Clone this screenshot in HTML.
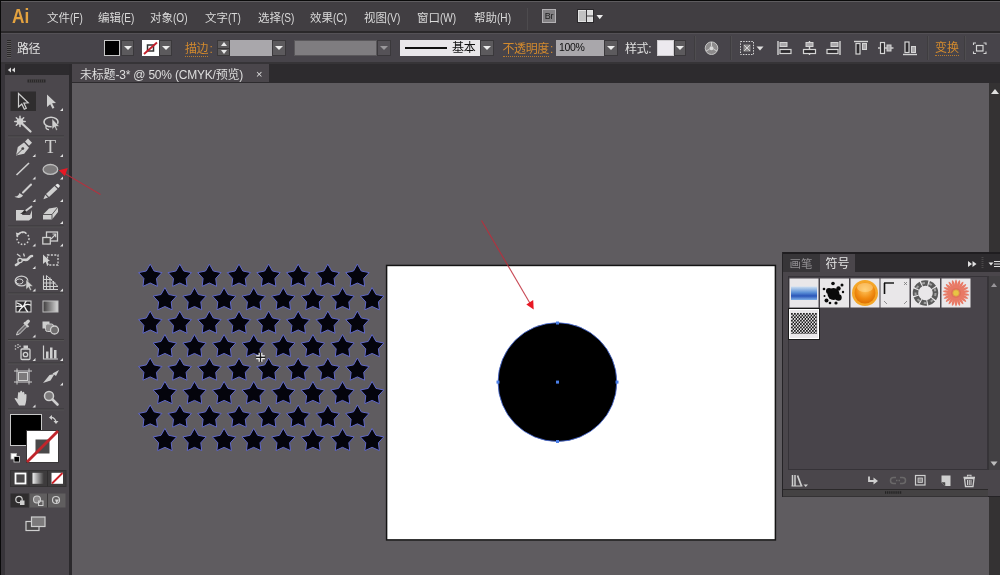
<!DOCTYPE html>
<html lang="zh"><head><meta charset="utf-8"><title>Ai</title>
<style>
*{margin:0;padding:0;box-sizing:border-box}
html,body{width:1000px;height:575px;overflow:hidden;background:#5f5c60;font-family:"Liberation Sans","Noto Sans CJK SC",sans-serif;font-size:12px;color:#dcdcdc}
.abs{position:absolute}
#menubar,#ctrl,#tab,.gs{will-change:transform}
#menubar{left:0;top:0;width:1000px;height:32px;background:#413e42;border-top:1px solid #0a0a0a;box-shadow:inset 0 1px 0 #5e5c5f}
#menubar span{position:absolute;top:9.5px;line-height:14px;font-size:11.5px;color:#dadada;white-space:nowrap;letter-spacing:-.1px}
#menubar span small{font-size:12px;letter-spacing:0;display:inline-block;transform:scaleX(.84);transform-origin:0 50%}
#mline{left:0;top:31px;width:1000px;height:2px;background:#2a282a}
#ctrl{left:0;top:33px;width:1000px;height:29px;background:#47444a;border-top:1px solid #545156}
#ctrl .t{position:absolute;top:8px;line-height:14px;font-size:12px;white-space:nowrap;letter-spacing:-.4px}
.or{color:#d28a2e;border-bottom:1px dotted #b87a2c}
.dd{position:absolute;top:6px;height:16px;background:#5c5a5d;border:1px solid #3a383b}
.dd:after{content:"";position:absolute;left:50%;top:5px;margin-left:-4px;border-left:4px solid transparent;border-right:4px solid transparent;border-top:4.5px solid #ececec}
.box{position:absolute;top:6px;height:16px}
.dis:after{border-top-color:#9a989b}
#strip{left:0;top:62px;width:1000px;height:3px;background:#363437}
#tabbar{left:72px;top:64px;width:928px;height:19px;background:#2d2b2e}
#tab{left:72px;top:64px;width:197px;height:18px;overflow:hidden;background:#4a464b;font-size:12px;line-height:23px;color:#dedede;padding-left:8px;white-space:nowrap;letter-spacing:-.2px}
#tools{left:0;top:64px;width:72px;height:511px;background:#4b474c;border-left:5px solid #38353a;border-right:3px solid #2b292c}
#toolhead{left:5px;top:64px;width:64px;height:11px;background:#2d2b2e}
#lb{left:0;top:0;width:1px;height:575px;background:#0a0a0a}
</style></head><body>

<div id="menubar" class="abs">
<span style="left:11.500px;top:3px;font-size:20.5px;line-height:24px;font-weight:bold;color:#e3a23f;letter-spacing:0;transform:scaleX(.84);transform-origin:0 0">Ai</span>
<span style="left:47px">文件<small>(F)</small></span>
<span style="left:98px">编辑<small>(E)</small></span>
<span style="left:150px">对象<small>(O)</small></span>
<span style="left:205px">文字<small>(T)</small></span>
<span style="left:258px">选择<small>(S)</small></span>
<span style="left:310px">效果<small>(C)</small></span>
<span style="left:364px">视图<small>(V)</small></span>
<span style="left:417px">窗口<small>(W)</small></span>
<span style="left:474px">帮助<small>(H)</small></span>
<div class="abs" style="left:527px;top:7px;width:1px;height:22px;background:#4d4b4e"></div>
<div class="abs" style="left:542px;top:8px;width:14px;height:14px;background:#838184;border:1px solid #b4b2b5;font-size:9px;line-height:12px;text-align:center;color:#1c1c1c;letter-spacing:-.3px">Br</div>
<svg class="abs" style="left:577px;top:8px" width="30" height="15" viewBox="0 0 30 15"><rect x="0.5" y="0.5" width="16" height="13" fill="#e4e4e4" stroke="#2a282b"/><rect x="2" y="2" width="7" height="10" fill="#c2c2c2"/><rect x="10" y="2" width="5" height="4.500" fill="#dcdcdc"/><rect x="10" y="7.500" width="5" height="4.500" fill="#dcdcdc"/><path d="M9.500 1v12M9.500 7h6.500" stroke="#3a383b" stroke-width="1"/><path d="M19.500 6h6.500l-3.250 4.200z" fill="#ececec"/></svg>
</div><div id="mline" class="abs"></div>
<div id="ctrl" class="abs">
<div class="abs" style="left:7px;top:6px;width:4px;height:18px;background:repeating-linear-gradient(#2a2829 0 1px,#5a5859 1px 2px)"></div>
<span class="t" style="left:17px;color:#e0e0e0">路径</span>
<div class="box" style="left:104px;width:16px;background:#000;border:1px solid #c8c8c8"></div>
<div class="dd" style="left:121px;width:13px"></div>
<svg class="abs" style="left:141.500px;top:6px" width="17" height="16" viewBox="0.500 0 17 16"><rect width="18" height="16" fill="#fff"/><rect x="6" y="5" width="6" height="6" fill="none" stroke="#333" stroke-width="1.500"/><path d="M2.500 14L15.500 2.500" stroke="#c4202c" stroke-width="1.900"/></svg>
<div class="dd" style="left:159px;width:13px"></div>
<span class="t or" style="left:185px">描边</span><span class="t" style="left:209.500px;color:#d28a2e">:</span>
<div class="box" style="left:217px;width:13px;background:#5c5a5b;border:1px solid #3a3839"><i style="position:absolute;left:2.500px;top:1px;border-left:3px solid transparent;border-right:3px solid transparent;border-bottom:4px solid #e8e8e8"></i><i style="position:absolute;left:2.500px;top:9px;border-left:3px solid transparent;border-right:3px solid transparent;border-top:4px solid #e8e8e8"></i><i style="position:absolute;left:0;top:6.500px;width:11px;height:1px;background:#3a3839"></i></div>
<div class="box" style="left:230px;width:42px;background:#a9a7ab"></div>
<div class="dd" style="left:272px;width:14px"></div>
<div class="box" style="left:294px;width:83px;background:#7f7d80;border:1px solid #5a585b"></div>
<div class="dd dis" style="left:377px;width:14px;background:#555257"></div>
<div class="box" style="left:400px;width:80px;background:#e9e7ea"><i style="position:absolute;left:5px;top:7px;width:42px;height:2px;background:#111"></i><span style="position:absolute;left:52px;top:1px;font-size:12px;line-height:14px;color:#111;letter-spacing:-.3px">基本</span></div>
<div class="dd" style="left:480px;width:14px"></div>
<span class="t or" style="left:502.500px">不透明度</span><span class="t" style="left:550px;color:#d28a2e">:</span>
<div class="box" style="left:556px;width:48px;background:#a9a7ab;color:#111;font-size:10.5px;line-height:15px;padding-left:3px;letter-spacing:-.3px">100%</div>
<div class="dd" style="left:604px;width:14px"></div>
<span class="t" style="left:625px;color:#e0e0e0">样式:</span>
<div class="box" style="left:657px;width:17px;background:#ece9ee;border:1px solid #cfcdd0"></div>
<div class="dd" style="left:674px;width:12px"></div>
</div>
<div id="strip" class="abs"></div><div id="tabbar" class="abs"></div>
<div id="tab" class="abs">未标题-3* @ 50% (CMYK/预览)<span style="position:absolute;left:184px;top:-1px;font-size:11px">×</span></div>
<div id="tools" class="abs"></div><div id="toolhead" class="abs"></div><div id="lb" class="abs"></div>
<svg class="abs gs" style="left:0;top:0" width="80" height="575" viewBox="0 0 80 575"><path d="M11 67.500v5l-3.200-2.500zM15 67.500v5l-3.200-2.500z" fill="#d8d8d8"/><rect x="27.500" y="79.500" width="18" height="3" fill="#2b292a"/><g stroke="#4a4849" stroke-width="0.700"><path d="M29.5 79.500v3"/><path d="M31.5 79.500v3"/><path d="M33.5 79.500v3"/><path d="M35.5 79.500v3"/><path d="M37.5 79.500v3"/><path d="M39.5 79.500v3"/><path d="M41.5 79.500v3"/><path d="M43.5 79.500v3"/></g><path d="M8 136.0H64" stroke="#3b393a" stroke-width="1"/><path d="M8 137.0H64" stroke="#535152" stroke-width="1"/><path d="M8 226.0H64" stroke="#3b393a" stroke-width="1"/><path d="M8 227.0H64" stroke="#535152" stroke-width="1"/><path d="M8 293.0H64" stroke="#3b393a" stroke-width="1"/><path d="M8 294.0H64" stroke="#535152" stroke-width="1"/><path d="M8 339.5H64" stroke="#3b393a" stroke-width="1"/><path d="M8 340.5H64" stroke="#535152" stroke-width="1"/><path d="M8 363.0H64" stroke="#3b393a" stroke-width="1"/><path d="M8 364.0H64" stroke="#535152" stroke-width="1"/><path d="M8 409.0H64" stroke="#3b393a" stroke-width="1"/><path d="M8 410.0H64" stroke="#535152" stroke-width="1"/><path d="M63.0 111.0v-3l-3 3z" fill="#e0e0e0"/><path d="M35.5 157.0v-3l-3 3z" fill="#e0e0e0"/><path d="M63.0 157.0v-3l-3 3z" fill="#e0e0e0"/><path d="M35.5 179.5v-3l-3 3z" fill="#e0e0e0"/><path d="M63.0 179.5v-3l-3 3z" fill="#e0e0e0"/><path d="M35.5 202.0v-3l-3 3z" fill="#e0e0e0"/><path d="M63.0 202.0v-3l-3 3z" fill="#e0e0e0"/><path d="M63.0 224.0v-3l-3 3z" fill="#e0e0e0"/><path d="M35.5 246.5v-3l-3 3z" fill="#e0e0e0"/><path d="M63.0 246.5v-3l-3 3z" fill="#e0e0e0"/><path d="M35.5 269.0v-3l-3 3z" fill="#e0e0e0"/><path d="M35.5 291.5v-3l-3 3z" fill="#e0e0e0"/><path d="M63.0 291.5v-3l-3 3z" fill="#e0e0e0"/><path d="M35.5 337.5v-3l-3 3z" fill="#e0e0e0"/><path d="M35.5 361.0v-3l-3 3z" fill="#e0e0e0"/><path d="M63.0 361.0v-3l-3 3z" fill="#e0e0e0"/><path d="M63.0 385.5v-3l-3 3z" fill="#e0e0e0"/><path d="M35.5 407.5v-3l-3 3z" fill="#e0e0e0"/><rect x="10.500" y="91.500" width="25.500" height="19.500" fill="#2f2d2e"/><path d="M18.500 93.500V107l3.300-3 2.500 5.300 2-1-2.500-5.200 4.400-.3z" fill="#2f2d2e" stroke="#cfcfcf" stroke-width="1.200" stroke-linejoin="miter"/><path d="M47 94.500V107l3.200-2.800 2.300 4.600 1.900-1-2.300-4.500 3.900-.3z" fill="#cfcfcf"/><g stroke="#cfcfcf" stroke-linecap="round"><path d="M22.500 124L30.500 131.500" stroke-width="2.300"/><path d="M20 116.300V126.500M14.800 121.500H25.200M16.300 117.800L23.700 125.200M23.700 117.800L16.300 125.200" stroke-width="1.500"/></g><circle cx="20" cy="121.500" r="3.300" fill="#cfcfcf"/><ellipse cx="51" cy="122" rx="7" ry="4.800" fill="none" stroke="#cfcfcf" stroke-width="1.600"/><path d="M46.500 125.500c-1.500 2 0 4.500 2.500 4" fill="none" stroke="#cfcfcf" stroke-width="1.300"/><path d="M52 118.500v11l2.600-2.400 1.500 3.400 1.500-.7-1.500-3.300 3.300-.2z" fill="#cfcfcf" stroke="#4a4849" stroke-width="0.600"/><path d="M16 155.500l1.800-8.500 6.200-4.500 5 5.200-4.800 6z" fill="#cfcfcf"/><path d="M25 141.500l3-3 4 4.200-3 3z" fill="#cfcfcf"/><path d="M16.500 155l6-6" stroke="#4a4849" stroke-width="1"/><circle cx="22.800" cy="148.600" r="1.400" fill="#4a4849"/><text x="50.300" y="153.300" font-family="Liberation Serif,serif" font-size="18.500" text-anchor="middle" fill="#cfcfcf">T</text><path d="M16.500 175L29 163" stroke="#cfcfcf" stroke-width="1.600"/><ellipse cx="50.400" cy="169.400" rx="7.300" ry="4.900" fill="#7c7a7b" stroke="#bdbdbd" stroke-width="1.300"/><path d="M31 184.500L23 192.500" stroke="#cfcfcf" stroke-width="2" stroke-linecap="round"/><path d="M14.500 196.500c3 .3 4-1 5-3.500l3.500 2.500c-1.500 2.500-5 3.500-8.500 1z" fill="#cfcfcf"/><path d="M54.500 186l3 3-8.500 8-3-3z" fill="#cfcfcf"/><path d="M45.200 194.800l2.800 2.800-4.600 1.600z" fill="#cfcfcf"/><path d="M55.300 185.300l1.200-1a1.300 1.300 0 0 1 2 0l.8.800a1.300 1.300 0 0 1 0 2l-1 1z" fill="#e6e6e6"/><path d="M16 210h8l-2 5h8l2-5v8l-3 2.500H16z" fill="#cfcfcf"/><path d="M31.500 206.500l-6 4.500" stroke="#cfcfcf" stroke-width="1.800" stroke-linecap="round"/><path d="M20 213.500c2-.5 3.500-2.500 5-3.500l1.500 2c-1.500 1.500-4 2.500-6.500 1.500z" fill="#2f2d2e"/><path d="M49 208.500l9-1.500v5l-6 7.500h-9v-5z" fill="#cfcfcf"/><path d="M43 214.500h9l6-7.500M52 214.500v5" fill="none" stroke="#4a4849" stroke-width="0.900"/><circle cx="23" cy="238.500" r="6" fill="none" stroke="#cfcfcf" stroke-width="1.500" stroke-dasharray="1.600 1.700"/><path d="M17 236a6.200 6.200 0 0 1 9-3" fill="none" stroke="#cfcfcf" stroke-width="1.600"/><path d="M15.800 232.500l4.200 1-3.200 3z" fill="#cfcfcf"/><rect x="46.500" y="232" width="11" height="9" fill="none" stroke="#cfcfcf" stroke-width="1.300"/><rect x="42.800" y="237.500" width="7.500" height="6.500" fill="#4a4849" stroke="#cfcfcf" stroke-width="1.300"/><path d="M51 239l4.500-4.500M52.500 234h3.200v3.200" fill="none" stroke="#cfcfcf" stroke-width="1.100"/><path d="M16 265c3-1 3.500-4 6-5s4 1 6-1 2-3 4-3" fill="none" stroke="#cfcfcf" stroke-width="2.600" stroke-linecap="round"/><circle cx="20" cy="260.500" r="2.200" fill="#4a4849" stroke="#cfcfcf" stroke-width="1.200"/><path d="M17 254l3.500 2.500M23.500 253.500l1 3" stroke="#cfcfcf" stroke-width="1.300"/><rect x="47.500" y="255" width="10.500" height="10" fill="none" stroke="#cfcfcf" stroke-width="1.300" stroke-dasharray="2 1.400"/><path d="M43 254.500v9.500l2.500-2.200 1.800 3.600 1.500-.8-1.800-3.500 3-.2z" fill="#cfcfcf"/><ellipse cx="21.500" cy="281" rx="6.300" ry="4.800" fill="none" stroke="#cfcfcf" stroke-width="1.300"/><ellipse cx="19.500" cy="281.500" rx="3.500" ry="2.600" fill="none" stroke="#cfcfcf" stroke-width="1"/><path d="M26 279.500v10l2.500-2.300 1.600 3.300 1.500-.7-1.600-3.300 3-.2z" fill="#cfcfcf" stroke="#4a4849" stroke-width="0.500"/><path d="M43.500 275.500v14M46.500 275.500v14M50 277.500v12M53.500 281v8.500M43.500 289.500h14.500M43.500 286.500h14.500M43.500 283h12M43.500 279.500h8.500" fill="none" stroke="#cfcfcf" stroke-width="1.100"/><path d="M46.500 275.500l11.500 11" stroke="#cfcfcf" stroke-width="0.900"/><rect x="16" y="301" width="15" height="11" fill="#2c2a2d" stroke="#dedede" stroke-width="1"/><path d="M16.500 306.500c3-1.500 4.500 1 7-.5s3.500-2.500 7-1M19 311.500c1-3 3-3.500 4.500-5.500s1-3 2.500-4.500M24 306c1.500 1.500 1.500 3.500 3.500 5.500M17 303c1.500 .5 3 .5 4.500 2.500" fill="none" stroke="#f0f0f0" stroke-width="1.300" stroke-linecap="round"/><defs><linearGradient id="g1"><stop offset="0" stop-color="#3c3a3b"/><stop offset="1" stop-color="#d8d8d8"/></linearGradient></defs><rect x="43" y="301" width="15" height="11" fill="url(#g1)" stroke="#bdbdbd" stroke-width="1"/><path d="M16.500 335l1-3 8-8 2 2-8 8z" fill="#6c6a6d" stroke="#cfcfcf" stroke-width="1" stroke-linejoin="round"/><path d="M24 322.500l4.500 4.500" stroke="#cfcfcf" stroke-width="2"/><path d="M27 325l2.500-2.700a1.700 1.700 0 0 0-2.400-2.400L24.500 322.500z" fill="#cfcfcf"/><rect x="42.500" y="321.500" width="7" height="7" fill="#cfcfcf"/><rect x="45.500" y="324" width="8" height="7.500" rx="2" fill="#8d8b8c" stroke="#cfcfcf" stroke-width="1"/><circle cx="54.500" cy="330" r="4" fill="#6d6b6c" stroke="#cfcfcf" stroke-width="1.300"/><rect x="21" y="349" width="9" height="10.500" rx="1" fill="none" stroke="#cfcfcf" stroke-width="1.300"/><rect x="23.500" y="345.500" width="4.500" height="3" fill="#cfcfcf"/><circle cx="25.500" cy="354.500" r="2.200" fill="none" stroke="#cfcfcf" stroke-width="1.300"/><g fill="#cfcfcf"><circle cx="15.500" cy="346" r=".8"/><circle cx="18" cy="347.500" r=".8"/><circle cx="15.500" cy="349" r=".8"/><circle cx="18" cy="344.800" r=".8"/><circle cx="20" cy="346.300" r=".8"/></g><path d="M43.500 345.500v13.500h14.500" fill="none" stroke="#cfcfcf" stroke-width="1.200"/><rect x="46" y="351.500" width="2.500" height="7" fill="#cfcfcf"/><rect x="50" y="347.500" width="2.500" height="11" fill="#cfcfcf"/><rect x="54" y="350" width="2.500" height="8.500" fill="#cfcfcf"/><rect x="18.500" y="372.500" width="9" height="8" fill="#7c7a7b" stroke="#cfcfcf" stroke-width="1"/><path d="M14 371h18M14 382h18M17 368.500v16M29 368.500v16" stroke="#cfcfcf" stroke-width="1"/><path d="M43 383l6.500-8 5-1-4 6.500z" fill="#cfcfcf"/><path d="M52.500 373.500l6.500-3.500-3 6z" fill="#cfcfcf"/><path d="M19 405.500c-1.500-2-3-5-4.500-7 .8-1 2-.6 3 .8l.6-6.300c.1-1.300 1.700-1.300 1.800 0l.3-1.300c.2-1.300 1.800-1.300 1.900 0l.3 1c.3-1.300 1.800-1.200 1.900.1l.4 2c.4-1.200 1.800-1 1.800.3 0 3.500-.2 7.500-1.500 10.400z" fill="#cfcfcf"/><circle cx="49" cy="396" r="4.500" fill="#7c7a7b" stroke="#cfcfcf" stroke-width="1.500"/><path d="M52.500 399.500l5 5" stroke="#cfcfcf" stroke-width="2.600" stroke-linecap="round"/><rect x="10.500" y="414.500" width="31" height="31" fill="#000" stroke="#c8c8c8" stroke-width="1"/><rect x="26.500" y="430.500" width="32" height="32" fill="#fff" stroke="#3a3839" stroke-width="1"/><rect x="35.500" y="439.500" width="14" height="14" fill="#4a4849"/><path d="M27 462L58 431" stroke="#c0252b" stroke-width="2.800"/><path d="M50.500 417.500a5 5 0 0 1 5.500 5" fill="none" stroke="#cfcfcf" stroke-width="1.200"/><path d="M49 417.500l3-2.500v5zM56 424l-2.500-3h5z" fill="#cfcfcf"/><rect x="11" y="453.500" width="5.500" height="5.500" fill="#fff" stroke="#bbb" stroke-width=".8"/><rect x="14" y="456.500" width="5.500" height="5.500" fill="#000" stroke="#ddd" stroke-width=".8"/><rect x="10.500" y="470.500" width="55.500" height="16" fill="#3d3b3c" stroke="#343233" stroke-width="1"/><path d="M29 470.500v16M47.500 470.500v16" stroke="#2f2d2e" stroke-width="1"/><rect x="15.500" y="473.500" width="10" height="10" fill="#4a4849" stroke="#fff" stroke-width="1.800"/><defs><linearGradient id="g2"><stop offset="0" stop-color="#f0f0f0"/><stop offset="1" stop-color="#3a3839"/></linearGradient></defs><rect x="32.500" y="472.800" width="11.500" height="11" fill="url(#g2)"/><rect x="51.500" y="472.800" width="11.500" height="11" fill="#fff"/><path d="M52 483.500L62.500 473" stroke="#cc2229" stroke-width="1.800"/><rect x="10.500" y="493.500" width="18.500" height="14" fill="#2f2d2e"/><rect x="29" y="493.500" width="18" height="14" fill="#605e5f"/><rect x="47.500" y="493.500" width="18" height="14" fill="#605e5f"/><path d="M29 493.500v14M47.500 493.500v14" stroke="#3b393a" stroke-width="1"/><circle cx="19" cy="499.500" r="3.200" fill="none" stroke="#cfcfcf" stroke-width="1.200"/><rect x="20" y="500.500" width="4.500" height="4.500" fill="#cfcfcf"/><circle cx="37" cy="499.500" r="3.500" fill="#8a8889" stroke="#cfcfcf" stroke-width="1.100"/><rect x="38.500" y="501" width="4.500" height="4.500" fill="none" stroke="#cfcfcf" stroke-width="1"/><circle cx="56" cy="500" r="3.500" fill="none" stroke="#cfcfcf" stroke-width="1.200"/><path d="M55 499.500h4l-2.500 4z" fill="#cfcfcf"/><rect x="26" y="521.500" width="13" height="9" fill="#4a4849" stroke="#cfcfcf" stroke-width="1.200"/><rect x="31.500" y="517" width="13.500" height="9.500" fill="#7c7a7b" stroke="#cfcfcf" stroke-width="1.200"/></svg>
<svg class="abs" style="left:380px;top:260px" width="400" height="285" viewBox="380 260 400 285"><rect x="386.600" y="265.450" width="388.800" height="274.450" fill="#fff" stroke="#141414" stroke-width="1.500"/></svg>
<svg class="abs" style="left:0;top:0" width="1000" height="575" viewBox="0 0 1000 575">
<polygon points="150.20,264.10 154.10,271.03 161.90,272.60 156.52,278.45 157.43,286.35 150.20,283.04 142.97,286.35 143.88,278.45 138.50,272.60 146.30,271.03" fill="#04040c" stroke="#6068c8" stroke-width="1" stroke-linejoin="round"/>
<polygon points="179.80,264.10 183.70,271.03 191.50,272.60 186.12,278.45 187.03,286.35 179.80,283.04 172.57,286.35 173.48,278.45 168.10,272.60 175.90,271.03" fill="#04040c" stroke="#6068c8" stroke-width="1" stroke-linejoin="round"/>
<polygon points="209.40,264.10 213.30,271.03 221.10,272.60 215.72,278.45 216.63,286.35 209.40,283.04 202.17,286.35 203.08,278.45 197.70,272.60 205.50,271.03" fill="#04040c" stroke="#6068c8" stroke-width="1" stroke-linejoin="round"/>
<polygon points="239.00,264.10 242.90,271.03 250.70,272.60 245.32,278.45 246.23,286.35 239.00,283.04 231.77,286.35 232.68,278.45 227.30,272.60 235.10,271.03" fill="#04040c" stroke="#6068c8" stroke-width="1" stroke-linejoin="round"/>
<polygon points="268.60,264.10 272.50,271.03 280.30,272.60 274.92,278.45 275.83,286.35 268.60,283.04 261.37,286.35 262.28,278.45 256.90,272.60 264.70,271.03" fill="#04040c" stroke="#6068c8" stroke-width="1" stroke-linejoin="round"/>
<polygon points="298.20,264.10 302.10,271.03 309.90,272.60 304.52,278.45 305.43,286.35 298.20,283.04 290.97,286.35 291.88,278.45 286.50,272.60 294.30,271.03" fill="#04040c" stroke="#6068c8" stroke-width="1" stroke-linejoin="round"/>
<polygon points="327.80,264.10 331.70,271.03 339.50,272.60 334.12,278.45 335.03,286.35 327.80,283.04 320.57,286.35 321.48,278.45 316.10,272.60 323.90,271.03" fill="#04040c" stroke="#6068c8" stroke-width="1" stroke-linejoin="round"/>
<polygon points="357.40,264.10 361.30,271.03 369.10,272.60 363.72,278.45 364.63,286.35 357.40,283.04 350.17,286.35 351.08,278.45 345.70,272.60 353.50,271.03" fill="#04040c" stroke="#6068c8" stroke-width="1" stroke-linejoin="round"/>
<polygon points="164.90,287.57 168.80,294.50 176.60,296.07 171.22,301.92 172.13,309.82 164.90,306.51 157.67,309.82 158.58,301.92 153.20,296.07 161.00,294.50" fill="#04040c" stroke="#6068c8" stroke-width="1" stroke-linejoin="round"/>
<polygon points="194.50,287.57 198.40,294.50 206.20,296.07 200.82,301.92 201.73,309.82 194.50,306.51 187.27,309.82 188.18,301.92 182.80,296.07 190.60,294.50" fill="#04040c" stroke="#6068c8" stroke-width="1" stroke-linejoin="round"/>
<polygon points="224.10,287.57 228.00,294.50 235.80,296.07 230.42,301.92 231.33,309.82 224.10,306.51 216.87,309.82 217.78,301.92 212.40,296.07 220.20,294.50" fill="#04040c" stroke="#6068c8" stroke-width="1" stroke-linejoin="round"/>
<polygon points="253.70,287.57 257.60,294.50 265.40,296.07 260.02,301.92 260.93,309.82 253.70,306.51 246.47,309.82 247.38,301.92 242.00,296.07 249.80,294.50" fill="#04040c" stroke="#6068c8" stroke-width="1" stroke-linejoin="round"/>
<polygon points="283.30,287.57 287.20,294.50 295.00,296.07 289.62,301.92 290.53,309.82 283.30,306.51 276.07,309.82 276.98,301.92 271.60,296.07 279.40,294.50" fill="#04040c" stroke="#6068c8" stroke-width="1" stroke-linejoin="round"/>
<polygon points="312.90,287.57 316.80,294.50 324.60,296.07 319.22,301.92 320.13,309.82 312.90,306.51 305.67,309.82 306.58,301.92 301.20,296.07 309.00,294.50" fill="#04040c" stroke="#6068c8" stroke-width="1" stroke-linejoin="round"/>
<polygon points="342.50,287.57 346.40,294.50 354.20,296.07 348.82,301.92 349.73,309.82 342.50,306.51 335.27,309.82 336.18,301.92 330.80,296.07 338.60,294.50" fill="#04040c" stroke="#6068c8" stroke-width="1" stroke-linejoin="round"/>
<polygon points="372.10,287.57 376.00,294.50 383.80,296.07 378.42,301.92 379.33,309.82 372.10,306.51 364.87,309.82 365.78,301.92 360.40,296.07 368.20,294.50" fill="#04040c" stroke="#6068c8" stroke-width="1" stroke-linejoin="round"/>
<polygon points="150.20,311.04 154.10,317.97 161.90,319.54 156.52,325.39 157.43,333.29 150.20,329.98 142.97,333.29 143.88,325.39 138.50,319.54 146.30,317.97" fill="#04040c" stroke="#6068c8" stroke-width="1" stroke-linejoin="round"/>
<polygon points="179.80,311.04 183.70,317.97 191.50,319.54 186.12,325.39 187.03,333.29 179.80,329.98 172.57,333.29 173.48,325.39 168.10,319.54 175.90,317.97" fill="#04040c" stroke="#6068c8" stroke-width="1" stroke-linejoin="round"/>
<polygon points="209.40,311.04 213.30,317.97 221.10,319.54 215.72,325.39 216.63,333.29 209.40,329.98 202.17,333.29 203.08,325.39 197.70,319.54 205.50,317.97" fill="#04040c" stroke="#6068c8" stroke-width="1" stroke-linejoin="round"/>
<polygon points="239.00,311.04 242.90,317.97 250.70,319.54 245.32,325.39 246.23,333.29 239.00,329.98 231.77,333.29 232.68,325.39 227.30,319.54 235.10,317.97" fill="#04040c" stroke="#6068c8" stroke-width="1" stroke-linejoin="round"/>
<polygon points="268.60,311.04 272.50,317.97 280.30,319.54 274.92,325.39 275.83,333.29 268.60,329.98 261.37,333.29 262.28,325.39 256.90,319.54 264.70,317.97" fill="#04040c" stroke="#6068c8" stroke-width="1" stroke-linejoin="round"/>
<polygon points="298.20,311.04 302.10,317.97 309.90,319.54 304.52,325.39 305.43,333.29 298.20,329.98 290.97,333.29 291.88,325.39 286.50,319.54 294.30,317.97" fill="#04040c" stroke="#6068c8" stroke-width="1" stroke-linejoin="round"/>
<polygon points="327.80,311.04 331.70,317.97 339.50,319.54 334.12,325.39 335.03,333.29 327.80,329.98 320.57,333.29 321.48,325.39 316.10,319.54 323.90,317.97" fill="#04040c" stroke="#6068c8" stroke-width="1" stroke-linejoin="round"/>
<polygon points="357.40,311.04 361.30,317.97 369.10,319.54 363.72,325.39 364.63,333.29 357.40,329.98 350.17,333.29 351.08,325.39 345.70,319.54 353.50,317.97" fill="#04040c" stroke="#6068c8" stroke-width="1" stroke-linejoin="round"/>
<polygon points="164.90,334.51 168.80,341.44 176.60,343.01 171.22,348.86 172.13,356.76 164.90,353.45 157.67,356.76 158.58,348.86 153.20,343.01 161.00,341.44" fill="#04040c" stroke="#6068c8" stroke-width="1" stroke-linejoin="round"/>
<polygon points="194.50,334.51 198.40,341.44 206.20,343.01 200.82,348.86 201.73,356.76 194.50,353.45 187.27,356.76 188.18,348.86 182.80,343.01 190.60,341.44" fill="#04040c" stroke="#6068c8" stroke-width="1" stroke-linejoin="round"/>
<polygon points="224.10,334.51 228.00,341.44 235.80,343.01 230.42,348.86 231.33,356.76 224.10,353.45 216.87,356.76 217.78,348.86 212.40,343.01 220.20,341.44" fill="#04040c" stroke="#6068c8" stroke-width="1" stroke-linejoin="round"/>
<polygon points="253.70,334.51 257.60,341.44 265.40,343.01 260.02,348.86 260.93,356.76 253.70,353.45 246.47,356.76 247.38,348.86 242.00,343.01 249.80,341.44" fill="#04040c" stroke="#6068c8" stroke-width="1" stroke-linejoin="round"/>
<polygon points="283.30,334.51 287.20,341.44 295.00,343.01 289.62,348.86 290.53,356.76 283.30,353.45 276.07,356.76 276.98,348.86 271.60,343.01 279.40,341.44" fill="#04040c" stroke="#6068c8" stroke-width="1" stroke-linejoin="round"/>
<polygon points="312.90,334.51 316.80,341.44 324.60,343.01 319.22,348.86 320.13,356.76 312.90,353.45 305.67,356.76 306.58,348.86 301.20,343.01 309.00,341.44" fill="#04040c" stroke="#6068c8" stroke-width="1" stroke-linejoin="round"/>
<polygon points="342.50,334.51 346.40,341.44 354.20,343.01 348.82,348.86 349.73,356.76 342.50,353.45 335.27,356.76 336.18,348.86 330.80,343.01 338.60,341.44" fill="#04040c" stroke="#6068c8" stroke-width="1" stroke-linejoin="round"/>
<polygon points="372.10,334.51 376.00,341.44 383.80,343.01 378.42,348.86 379.33,356.76 372.10,353.45 364.87,356.76 365.78,348.86 360.40,343.01 368.20,341.44" fill="#04040c" stroke="#6068c8" stroke-width="1" stroke-linejoin="round"/>
<polygon points="150.20,357.98 154.10,364.91 161.90,366.48 156.52,372.33 157.43,380.23 150.20,376.92 142.97,380.23 143.88,372.33 138.50,366.48 146.30,364.91" fill="#04040c" stroke="#6068c8" stroke-width="1" stroke-linejoin="round"/>
<polygon points="179.80,357.98 183.70,364.91 191.50,366.48 186.12,372.33 187.03,380.23 179.80,376.92 172.57,380.23 173.48,372.33 168.10,366.48 175.90,364.91" fill="#04040c" stroke="#6068c8" stroke-width="1" stroke-linejoin="round"/>
<polygon points="209.40,357.98 213.30,364.91 221.10,366.48 215.72,372.33 216.63,380.23 209.40,376.92 202.17,380.23 203.08,372.33 197.70,366.48 205.50,364.91" fill="#04040c" stroke="#6068c8" stroke-width="1" stroke-linejoin="round"/>
<polygon points="239.00,357.98 242.90,364.91 250.70,366.48 245.32,372.33 246.23,380.23 239.00,376.92 231.77,380.23 232.68,372.33 227.30,366.48 235.10,364.91" fill="#04040c" stroke="#6068c8" stroke-width="1" stroke-linejoin="round"/>
<polygon points="268.60,357.98 272.50,364.91 280.30,366.48 274.92,372.33 275.83,380.23 268.60,376.92 261.37,380.23 262.28,372.33 256.90,366.48 264.70,364.91" fill="#04040c" stroke="#6068c8" stroke-width="1" stroke-linejoin="round"/>
<polygon points="298.20,357.98 302.10,364.91 309.90,366.48 304.52,372.33 305.43,380.23 298.20,376.92 290.97,380.23 291.88,372.33 286.50,366.48 294.30,364.91" fill="#04040c" stroke="#6068c8" stroke-width="1" stroke-linejoin="round"/>
<polygon points="327.80,357.98 331.70,364.91 339.50,366.48 334.12,372.33 335.03,380.23 327.80,376.92 320.57,380.23 321.48,372.33 316.10,366.48 323.90,364.91" fill="#04040c" stroke="#6068c8" stroke-width="1" stroke-linejoin="round"/>
<polygon points="357.40,357.98 361.30,364.91 369.10,366.48 363.72,372.33 364.63,380.23 357.40,376.92 350.17,380.23 351.08,372.33 345.70,366.48 353.50,364.91" fill="#04040c" stroke="#6068c8" stroke-width="1" stroke-linejoin="round"/>
<polygon points="164.90,381.45 168.80,388.38 176.60,389.95 171.22,395.80 172.13,403.70 164.90,400.39 157.67,403.70 158.58,395.80 153.20,389.95 161.00,388.38" fill="#04040c" stroke="#6068c8" stroke-width="1" stroke-linejoin="round"/>
<polygon points="194.50,381.45 198.40,388.38 206.20,389.95 200.82,395.80 201.73,403.70 194.50,400.39 187.27,403.70 188.18,395.80 182.80,389.95 190.60,388.38" fill="#04040c" stroke="#6068c8" stroke-width="1" stroke-linejoin="round"/>
<polygon points="224.10,381.45 228.00,388.38 235.80,389.95 230.42,395.80 231.33,403.70 224.10,400.39 216.87,403.70 217.78,395.80 212.40,389.95 220.20,388.38" fill="#04040c" stroke="#6068c8" stroke-width="1" stroke-linejoin="round"/>
<polygon points="253.70,381.45 257.60,388.38 265.40,389.95 260.02,395.80 260.93,403.70 253.70,400.39 246.47,403.70 247.38,395.80 242.00,389.95 249.80,388.38" fill="#04040c" stroke="#6068c8" stroke-width="1" stroke-linejoin="round"/>
<polygon points="283.30,381.45 287.20,388.38 295.00,389.95 289.62,395.80 290.53,403.70 283.30,400.39 276.07,403.70 276.98,395.80 271.60,389.95 279.40,388.38" fill="#04040c" stroke="#6068c8" stroke-width="1" stroke-linejoin="round"/>
<polygon points="312.90,381.45 316.80,388.38 324.60,389.95 319.22,395.80 320.13,403.70 312.90,400.39 305.67,403.70 306.58,395.80 301.20,389.95 309.00,388.38" fill="#04040c" stroke="#6068c8" stroke-width="1" stroke-linejoin="round"/>
<polygon points="342.50,381.45 346.40,388.38 354.20,389.95 348.82,395.80 349.73,403.70 342.50,400.39 335.27,403.70 336.18,395.80 330.80,389.95 338.60,388.38" fill="#04040c" stroke="#6068c8" stroke-width="1" stroke-linejoin="round"/>
<polygon points="372.10,381.45 376.00,388.38 383.80,389.95 378.42,395.80 379.33,403.70 372.10,400.39 364.87,403.70 365.78,395.80 360.40,389.95 368.20,388.38" fill="#04040c" stroke="#6068c8" stroke-width="1" stroke-linejoin="round"/>
<polygon points="150.20,404.92 154.10,411.85 161.90,413.42 156.52,419.27 157.43,427.17 150.20,423.86 142.97,427.17 143.88,419.27 138.50,413.42 146.30,411.85" fill="#04040c" stroke="#6068c8" stroke-width="1" stroke-linejoin="round"/>
<polygon points="179.80,404.92 183.70,411.85 191.50,413.42 186.12,419.27 187.03,427.17 179.80,423.86 172.57,427.17 173.48,419.27 168.10,413.42 175.90,411.85" fill="#04040c" stroke="#6068c8" stroke-width="1" stroke-linejoin="round"/>
<polygon points="209.40,404.92 213.30,411.85 221.10,413.42 215.72,419.27 216.63,427.17 209.40,423.86 202.17,427.17 203.08,419.27 197.70,413.42 205.50,411.85" fill="#04040c" stroke="#6068c8" stroke-width="1" stroke-linejoin="round"/>
<polygon points="239.00,404.92 242.90,411.85 250.70,413.42 245.32,419.27 246.23,427.17 239.00,423.86 231.77,427.17 232.68,419.27 227.30,413.42 235.10,411.85" fill="#04040c" stroke="#6068c8" stroke-width="1" stroke-linejoin="round"/>
<polygon points="268.60,404.92 272.50,411.85 280.30,413.42 274.92,419.27 275.83,427.17 268.60,423.86 261.37,427.17 262.28,419.27 256.90,413.42 264.70,411.85" fill="#04040c" stroke="#6068c8" stroke-width="1" stroke-linejoin="round"/>
<polygon points="298.20,404.92 302.10,411.85 309.90,413.42 304.52,419.27 305.43,427.17 298.20,423.86 290.97,427.17 291.88,419.27 286.50,413.42 294.30,411.85" fill="#04040c" stroke="#6068c8" stroke-width="1" stroke-linejoin="round"/>
<polygon points="327.80,404.92 331.70,411.85 339.50,413.42 334.12,419.27 335.03,427.17 327.80,423.86 320.57,427.17 321.48,419.27 316.10,413.42 323.90,411.85" fill="#04040c" stroke="#6068c8" stroke-width="1" stroke-linejoin="round"/>
<polygon points="357.40,404.92 361.30,411.85 369.10,413.42 363.72,419.27 364.63,427.17 357.40,423.86 350.17,427.17 351.08,419.27 345.70,413.42 353.50,411.85" fill="#04040c" stroke="#6068c8" stroke-width="1" stroke-linejoin="round"/>
<polygon points="164.90,428.39 168.80,435.32 176.60,436.89 171.22,442.74 172.13,450.64 164.90,447.33 157.67,450.64 158.58,442.74 153.20,436.89 161.00,435.32" fill="#04040c" stroke="#6068c8" stroke-width="1" stroke-linejoin="round"/>
<polygon points="194.50,428.39 198.40,435.32 206.20,436.89 200.82,442.74 201.73,450.64 194.50,447.33 187.27,450.64 188.18,442.74 182.80,436.89 190.60,435.32" fill="#04040c" stroke="#6068c8" stroke-width="1" stroke-linejoin="round"/>
<polygon points="224.10,428.39 228.00,435.32 235.80,436.89 230.42,442.74 231.33,450.64 224.10,447.33 216.87,450.64 217.78,442.74 212.40,436.89 220.20,435.32" fill="#04040c" stroke="#6068c8" stroke-width="1" stroke-linejoin="round"/>
<polygon points="253.70,428.39 257.60,435.32 265.40,436.89 260.02,442.74 260.93,450.64 253.70,447.33 246.47,450.64 247.38,442.74 242.00,436.89 249.80,435.32" fill="#04040c" stroke="#6068c8" stroke-width="1" stroke-linejoin="round"/>
<polygon points="283.30,428.39 287.20,435.32 295.00,436.89 289.62,442.74 290.53,450.64 283.30,447.33 276.07,450.64 276.98,442.74 271.60,436.89 279.40,435.32" fill="#04040c" stroke="#6068c8" stroke-width="1" stroke-linejoin="round"/>
<polygon points="312.90,428.39 316.80,435.32 324.60,436.89 319.22,442.74 320.13,450.64 312.90,447.33 305.67,450.64 306.58,442.74 301.20,436.89 309.00,435.32" fill="#04040c" stroke="#6068c8" stroke-width="1" stroke-linejoin="round"/>
<polygon points="342.50,428.39 346.40,435.32 354.20,436.89 348.82,442.74 349.73,450.64 342.50,447.33 335.27,450.64 336.18,442.74 330.80,436.89 338.60,435.32" fill="#04040c" stroke="#6068c8" stroke-width="1" stroke-linejoin="round"/>
<polygon points="372.10,428.39 376.00,435.32 383.80,436.89 378.42,442.74 379.33,450.64 372.10,447.33 364.87,450.64 365.78,442.74 360.40,436.89 368.20,435.32" fill="#04040c" stroke="#6068c8" stroke-width="1" stroke-linejoin="round"/>
<circle cx="557.4" cy="382.1" r="59.4" fill="#000" stroke="#4a6fe0" stroke-width="0.8"/>
<g fill="#4a7fe8"><rect x="556" y="380.600" width="3" height="3"/><rect x="556" y="321.500" width="3" height="3"/><rect x="556" y="440" width="3" height="3"/><rect x="496.500" y="380.600" width="3" height="3"/><rect x="615.500" y="380.600" width="3" height="3"/></g>
<g fill="none" stroke-width="1.200"><path d="M260.500 352.500v9.500M255.800 357.200h9.500" stroke="#1a1a1a" stroke-width="1.400"/><path d="M256.200 355.800h3v-3M264.800 355.800h-3v-3M256.200 358.700h3v3M264.800 358.700h-3v3" stroke="#f4f4f4"/></g>
<g stroke="#c02c3a" stroke-width="1.150" stroke-opacity=".85" fill="#e81824"><path d="M481.500 220.500L531 305"/><path d="M533.700 309.500L526.300 304.400L533.200 300z" stroke="none"/><path d="M100.500 194.500L64 173"/><path d="M58.800 170.300L67.800 168L64.800 176z" stroke="none"/></g>
</svg>
<div class="abs" style="left:989px;top:83px;width:11px;height:492px;background:#343233"></div><div class="abs" style="left:991px;top:89px;border-left:4px solid transparent;border-right:4px solid transparent;border-bottom:5px solid #e0e0e0"></div><div class="abs" style="left:782px;top:252px;width:218px;height:245px;background:#4a464b;border:1px solid #252326;border-right:none"></div><div class="abs" style="left:783px;top:252px;width:217px;height:20px;background:#2d2b2e;border-top:2px solid #1f1d20"></div><div class="abs gs" style="left:783px;top:254px;width:37px;height:18px;background:#373538;font-size:11.5px;line-height:21px;overflow:hidden;color:#908e91;padding-left:6.5px">画笔</div><div class="abs gs" style="left:820px;top:254px;width:35px;height:19px;background:#4a464b;font-size:12px;line-height:21px;overflow:hidden;color:#e6e6e6;padding-left:5.5px">符号</div><div class="abs" style="left:788px;top:276px;width:200px;height:194px;background:#48444a;border:1px solid #363338"></div><div class="abs" style="left:988px;top:276px;width:12px;height:194px;background:#424043;border-left:1px solid #363437"></div><svg class="abs" style="left:0;top:0" width="1000" height="575" viewBox="0 0 1000 575"><path d="M968 261l4 3-4 3zM972.500 261l4 3-4 3z" fill="#e0e0e0"/><path d="M982.500 257v12" stroke="#4a4849" stroke-width="2" stroke-dasharray="1 1"/><path d="M988.500 262.500h5l-2.500 3z" fill="#e0e0e0"/><path d="M994 261.500h6M994 264h6M994 266.500h6" stroke="#e0e0e0" stroke-width="1"/><path d="M991 287h6l-3-4z" fill="#98969a"/><path d="M990.500 461.500h7l-3.500 4.500z" fill="#bdbdbd"/><rect x="789.5" y="278.500" width="29" height="29" fill="#e9e7e9"/><rect x="820.0" y="278.500" width="29" height="29" fill="#e9e7e9"/><rect x="850.5" y="278.500" width="29" height="29" fill="#e9e7e9"/><rect x="880.5" y="278.500" width="29" height="29" fill="#e9e7e9"/><rect x="911.0" y="278.500" width="29" height="29" fill="#e9e7e9"/><rect x="941.5" y="278.500" width="29" height="29" fill="#e9e7e9"/><defs><linearGradient id="pb" x1="0" y1="0" x2="0" y2="1"><stop offset="0" stop-color="#cfe0f2"/><stop offset=".45" stop-color="#5a8fd6"/><stop offset=".7" stop-color="#2a55b8"/><stop offset="1" stop-color="#7fb0e8"/></linearGradient><radialGradient id="po" cx=".5" cy=".35" r=".7"><stop offset="0" stop-color="#ffc860"/><stop offset=".6" stop-color="#f08a10"/><stop offset="1" stop-color="#d86a00"/></radialGradient></defs><rect x="791" y="286.500" width="26" height="13.500" fill="url(#pb)"/><g fill="#0a0a0a"><circle cx="833.500" cy="294" r="6"/><circle cx="829" cy="291" r="3"/><circle cx="838.500" cy="297.500" r="3.200"/><circle cx="826.500" cy="300.500" r="2"/><circle cx="833" cy="283.500" r="1.800"/><circle cx="842" cy="285" r="1.500"/><circle cx="838.500" cy="288.500" r="2.200"/><circle cx="824" cy="289" r="1.300"/><circle cx="843" cy="292" r="1.200"/><circle cx="830" cy="303" r="1.300"/><circle cx="836" cy="303" r="1.600"/><circle cx="824.500" cy="296" r="1"/></g><circle cx="865" cy="293" r="13" fill="#f4a628"/><circle cx="865" cy="293" r="10.500" fill="url(#po)"/><ellipse cx="865" cy="287.500" rx="8" ry="4.500" fill="#ffd890" opacity=".55"/><path d="M884.500 283v11" stroke="#111" stroke-width="1.600"/><path d="M884 283h10" stroke="#111" stroke-width="1.400"/><g stroke="#777" stroke-width=".8" fill="none"><path d="M904 282l3 3M904 285l3-3M884 301l3 3M904 304l3-3"/></g><circle cx="925.500" cy="293" r="10" fill="none" stroke="#5a5a5a" stroke-width="5.500" stroke-dasharray="6 1.200"/><circle cx="925.500" cy="293" r="10" fill="none" stroke="#a0a0a0" stroke-width="2" stroke-dasharray="3 4.200"/><g fill="#e87a66"><ellipse cx="956" cy="285.800" rx="1.350" ry="6.200" transform="rotate(0.0 956 293)"/><ellipse cx="956" cy="285.800" rx="1.350" ry="6.200" transform="rotate(16.4 956 293)"/><ellipse cx="956" cy="285.800" rx="1.350" ry="6.200" transform="rotate(32.7 956 293)"/><ellipse cx="956" cy="285.800" rx="1.350" ry="6.200" transform="rotate(49.1 956 293)"/><ellipse cx="956" cy="285.800" rx="1.350" ry="6.200" transform="rotate(65.5 956 293)"/><ellipse cx="956" cy="285.800" rx="1.350" ry="6.200" transform="rotate(81.8 956 293)"/><ellipse cx="956" cy="285.800" rx="1.350" ry="6.200" transform="rotate(98.2 956 293)"/><ellipse cx="956" cy="285.800" rx="1.350" ry="6.200" transform="rotate(114.5 956 293)"/><ellipse cx="956" cy="285.800" rx="1.350" ry="6.200" transform="rotate(130.9 956 293)"/><ellipse cx="956" cy="285.800" rx="1.350" ry="6.200" transform="rotate(147.3 956 293)"/><ellipse cx="956" cy="285.800" rx="1.350" ry="6.200" transform="rotate(163.6 956 293)"/><ellipse cx="956" cy="285.800" rx="1.350" ry="6.200" transform="rotate(180.0 956 293)"/><ellipse cx="956" cy="285.800" rx="1.350" ry="6.200" transform="rotate(196.4 956 293)"/><ellipse cx="956" cy="285.800" rx="1.350" ry="6.200" transform="rotate(212.7 956 293)"/><ellipse cx="956" cy="285.800" rx="1.350" ry="6.200" transform="rotate(229.1 956 293)"/><ellipse cx="956" cy="285.800" rx="1.350" ry="6.200" transform="rotate(245.5 956 293)"/><ellipse cx="956" cy="285.800" rx="1.350" ry="6.200" transform="rotate(261.8 956 293)"/><ellipse cx="956" cy="285.800" rx="1.350" ry="6.200" transform="rotate(278.2 956 293)"/><ellipse cx="956" cy="285.800" rx="1.350" ry="6.200" transform="rotate(294.5 956 293)"/><ellipse cx="956" cy="285.800" rx="1.350" ry="6.200" transform="rotate(310.9 956 293)"/><ellipse cx="956" cy="285.800" rx="1.350" ry="6.200" transform="rotate(327.3 956 293)"/><ellipse cx="956" cy="285.800" rx="1.350" ry="6.200" transform="rotate(343.6 956 293)"/></g><circle cx="956" cy="293" r="5" fill="#e0705c"/><circle cx="956" cy="293" r="3.200" fill="#e8c444" stroke="#dc9a48" stroke-width=".8"/><rect x="789.500" y="309.500" width="29" height="29" fill="#e9e7e9" stroke="#fff" stroke-width="1"/><rect x="788.500" y="308.500" width="31" height="31" fill="none" stroke="#1a1a1a" stroke-width="1"/><defs><pattern id="ht" x="791" y="313" width="3" height="3.400" patternUnits="userSpaceOnUse"><circle cx=".9" cy=".9" r=".95" fill="#111"/><circle cx="2.400" cy="2.600" r=".95" fill="#111"/></pattern></defs><rect x="791" y="313" width="26" height="21" fill="url(#ht)"/><path d="M783 489.500H988" stroke="#2b292a" stroke-width="1"/><rect x="783" y="490" width="205" height="6.500" fill="#444243"/><path d="M885 492.500h17" stroke="#222" stroke-width="2.400" stroke-dasharray="1.200 .9"/><path d="M792.500 475v11M795 475v11" stroke="#cfcfcf" stroke-width="1.500"/><path d="M797.500 475.500l4 10.500" stroke="#cfcfcf" stroke-width="1.700"/><path d="M791.500 486h11" stroke="#cfcfcf" stroke-width="1"/><path d="M803.500 484.500h4.500l-2.250 2.500z" fill="#cfcfcf"/><path d="M869 476.500v4.500h5" fill="none" stroke="#cfcfcf" stroke-width="1.800"/><path d="M873.500 477.500l4.500 3.500-4.500 3.500z" fill="#cfcfcf"/><g fill="none" stroke="#6a6869" stroke-width="1.500"><path d="M896 477.500h-2.500a3 3 0 0 0 0 6h2.500M900 477.500h2.500a3 3 0 0 1 0 6h-2.500"/><path d="M896 480.500h4" stroke-dasharray="1.500 1"/></g><rect x="915.500" y="475.500" width="9.500" height="9.500" fill="none" stroke="#cfcfcf" stroke-width="1.200"/><rect x="918" y="478" width="4.500" height="4.500" fill="#8a8889" stroke="#cfcfcf" stroke-width=".8"/><path d="M941.500 475.500h9v10.500h-5.500l-3.500-3.500z" fill="#cfcfcf"/><path d="M941.500 482.500h3.500v3.500" fill="#4a4849" stroke="#4a4849" stroke-width=".5"/><rect x="943.500" y="477.500" width="4.500" height="4" fill="#4a4849" opacity=".0"/><path d="M964.500 478.500h9.500l-1 8h-7.500z" fill="none" stroke="#cfcfcf" stroke-width="1.300"/><path d="M963.500 477.500h11.500" stroke="#cfcfcf" stroke-width="1.600"/><path d="M967.500 476.500v-1.300h3.500v1.300" fill="none" stroke="#cfcfcf" stroke-width="1.100"/><path d="M967.500 480v5M969.250 480v5M971 480v5" stroke="#cfcfcf" stroke-width="1"/></svg>
<svg class="abs" style="left:0;top:0" width="1000" height="64" viewBox="0 0 1000 64"><path d="M694.5 36v24" stroke="#3f3d40" stroke-width="1"/><path d="M695.5 36v24" stroke="#4f4d50" stroke-width="1"/><path d="M730.5 36v24" stroke="#3f3d40" stroke-width="1"/><path d="M731.5 36v24" stroke="#4f4d50" stroke-width="1"/><path d="M927.5 36v24" stroke="#3f3d40" stroke-width="1"/><path d="M928.5 36v24" stroke="#4f4d50" stroke-width="1"/><path d="M964.5 36v24" stroke="#3f3d40" stroke-width="1"/><path d="M965.5 36v24" stroke="#4f4d50" stroke-width="1"/><circle cx="711.500" cy="48.200" r="6.300" fill="#8d8b8c" stroke="#c4c4c4" stroke-width="1"/><circle cx="711.500" cy="48.200" r="2" fill="#d8d8d8"/><path d="M711.500 42v4M706 51l3.500-1.800M717 51l-3.500-1.800" stroke="#d0d0d0" stroke-width="1"/><rect x="740.500" y="41.500" width="13" height="13" fill="none" stroke="#d4d4d4" stroke-width="1" stroke-dasharray="1.500 1.200"/><rect x="743.500" y="44.500" width="7" height="7" fill="#8d8b8c"/><path d="M744 45l6 6M750 45l-6 6" stroke="#d4d4d4" stroke-width="1"/><path d="M756.500 46.500h7l-3.500 4z" fill="#e0e0e0"/><path d="M778 41v14" stroke="#d4d4d4" stroke-width="1.400"/><rect x="780" y="42.500" width="7" height="4" fill="#a9a7aa" stroke="#d4d4d4" stroke-width="1"/><rect x="780" y="49.500" width="11" height="4" fill="#2c2a2d" stroke="#d4d4d4" stroke-width="1.200"/><path d="M809.500 41v14" stroke="#d4d4d4" stroke-width="1.400"/><rect x="806" y="42.500" width="7" height="4" fill="#a9a7aa" stroke="#d4d4d4" stroke-width="1"/><rect x="803.500" y="49.500" width="12" height="4" fill="#2c2a2d" stroke="#d4d4d4" stroke-width="1.200"/><path d="M840 41v14" stroke="#d4d4d4" stroke-width="1.400"/><rect x="831" y="42.500" width="7" height="4" fill="#a9a7aa" stroke="#d4d4d4" stroke-width="1"/><rect x="827" y="49.500" width="11" height="4" fill="#2c2a2d" stroke="#d4d4d4" stroke-width="1.200"/><path d="M854 41.500h14" stroke="#d4d4d4" stroke-width="1.400"/><rect x="856" y="43.500" width="4" height="10.500" fill="#2c2a2d" stroke="#d4d4d4" stroke-width="1.200"/><rect x="862.500" y="43.500" width="4" height="6" fill="#a9a7aa" stroke="#d4d4d4" stroke-width="1"/><path d="M878 48h15.500" stroke="#d4d4d4" stroke-width="1.400"/><rect x="880.500" y="42.500" width="4" height="11" fill="#2c2a2d" stroke="#d4d4d4" stroke-width="1.200"/><rect x="887" y="45" width="4" height="6" fill="#a9a7aa" stroke="#d4d4d4" stroke-width="1"/><path d="M903 54.500h14" stroke="#d4d4d4" stroke-width="1.400"/><rect x="905" y="42" width="4" height="10.500" fill="#2c2a2d" stroke="#d4d4d4" stroke-width="1.200"/><rect x="911.500" y="46.500" width="4" height="6" fill="#a9a7aa" stroke="#d4d4d4" stroke-width="1"/><rect x="976.500" y="45.500" width="6.500" height="5.500" fill="none" stroke="#d4d4d4" stroke-width="1.200"/><path d="M973.500 45v-2h2.500M986 45v-2h-2.500M973.500 51.500v2h2.500M986 51.500v2h-2.500" fill="none" stroke="#d4d4d4" stroke-width="1.100"/></svg>
<span class="abs or gs" style="left:935px;top:41px;line-height:14px;font-size:12px">变换</span>
</body></html>
